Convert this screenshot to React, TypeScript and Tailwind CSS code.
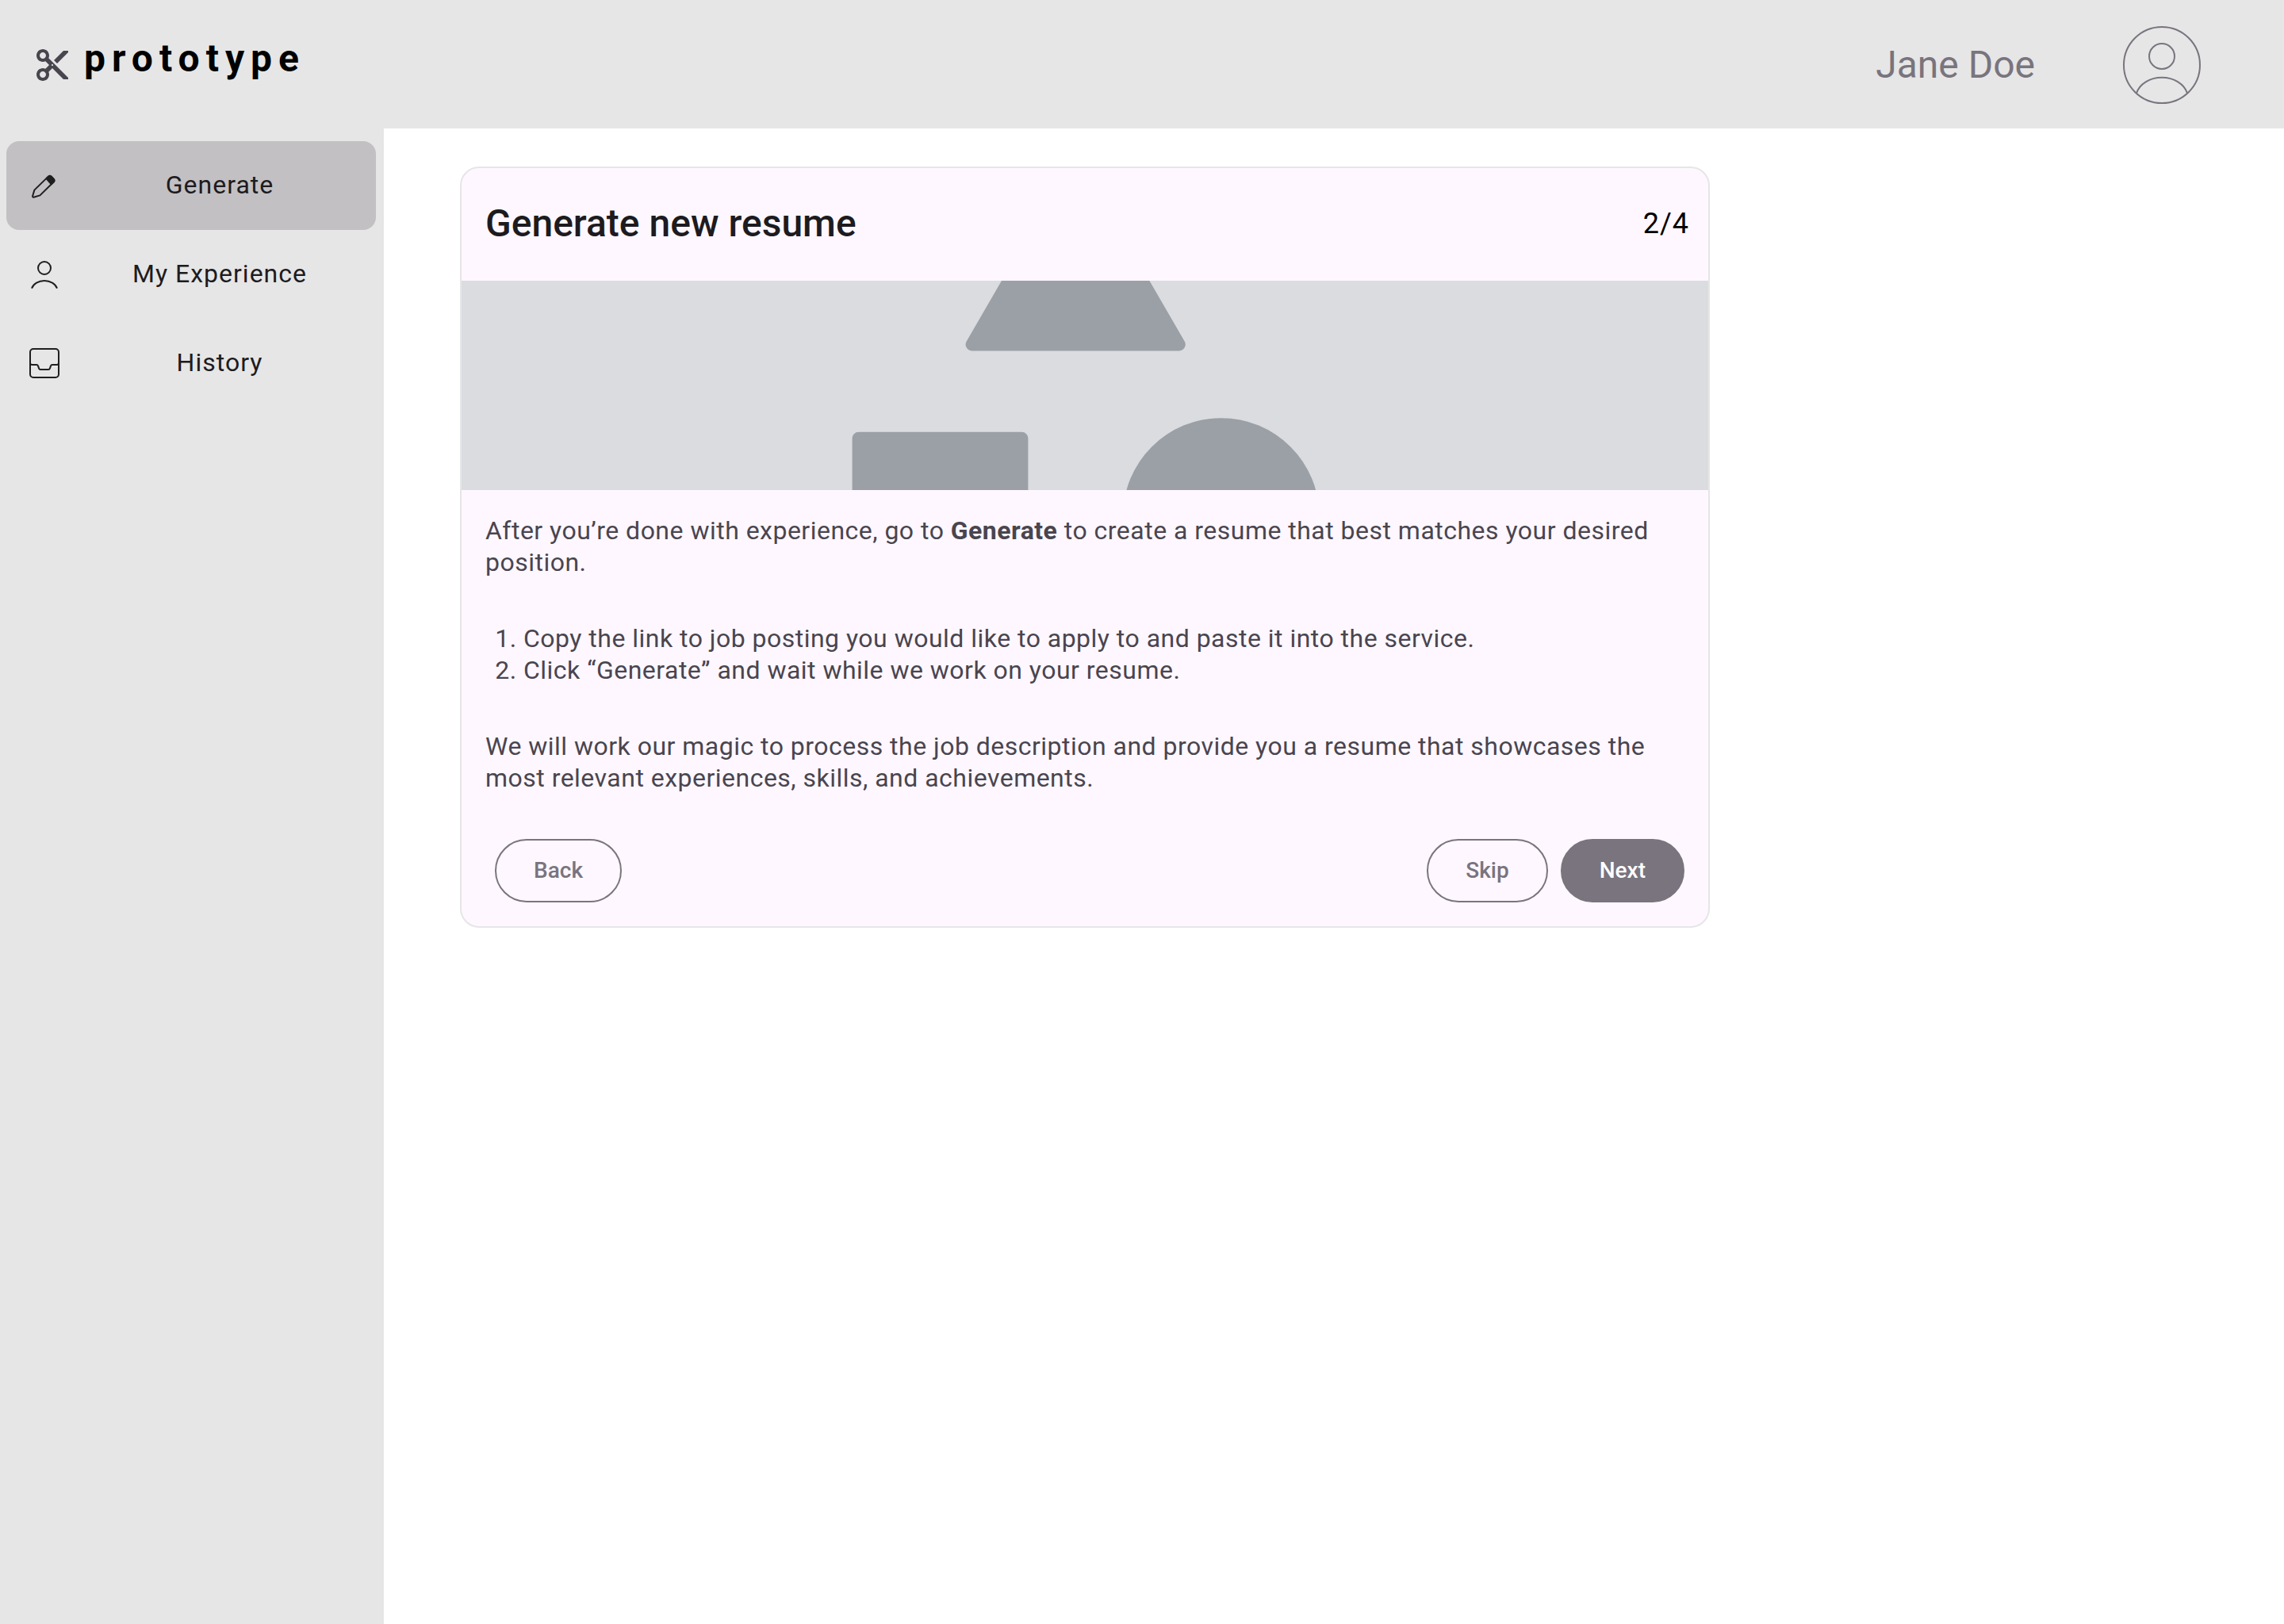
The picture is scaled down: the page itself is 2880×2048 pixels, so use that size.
import type { ReactNode } from "react";
import { MdContentCut } from "react-icons/md";

function PencilIcon() {
  return (
    <svg viewBox="0 0 48 48" className="size-12 shrink-0" fill="none" stroke="#1f1f1f" strokeWidth="2" strokeLinecap="round" strokeLinejoin="round" aria-hidden="true">
      <path d="M11.4 29.6 28.6 12.9Q30.5 10.8 32.5 12.5L35.6 15.6Q37.3 17.6 35.6 19.5L18.4 36.4 10.4 38.7Q8.9 38.9 9.1 37.2Z" />
      <path d="M26.4 15.2 28.6 12.9Q30.5 10.8 32.5 12.5L35.6 15.6Q37.3 17.6 35.6 19.5L32.7 22.3Z" fill="#1f1f1f" />
    </svg>
  );
}

function PersonIcon() {
  return (
    <svg viewBox="0 0 48 48" className="size-12 shrink-0" fill="none" stroke="#1f1f1f" strokeWidth="2" aria-hidden="true">
      <circle cx="24" cy="16" r="8" />
      <path d="M8 41.6C10.2 35.9 16.6 32 24 32S37.8 35.9 40 41.6" />
    </svg>
  );
}

function InboxIcon() {
  return (
    <svg viewBox="0 0 48 48" className="size-12 shrink-0" fill="none" stroke="#1f1f1f" strokeWidth="2" strokeLinejoin="round" aria-hidden="true">
      <rect x="6" y="6" width="36" height="36" rx="4" />
      <path d="M6 23.5Q6 26 8.5 26H14Q15.6 26 16 27.4L17 30.4Q17.5 32 19 32H29Q30.5 32 31 30.4L32 27.4Q32.4 26 34 26H39.5Q42 26 42 23.5" />
    </svg>
  );
}

function Avatar() {
  return (
    <svg viewBox="0 0 100 100" className="size-25 shrink-0" fill="none" stroke="#79747e" strokeWidth="2" aria-hidden="true">
      <circle cx="50" cy="50" r="48" />
      <circle cx="50" cy="39" r="16" />
      <path d="M18 85.6C21.6 74 34.6 65.8 50 65.8S78.4 74 82 85.6" />
    </svg>
  );
}

function Illustration() {
  return (
    <svg viewBox="0 0 1572 264" preserveAspectRatio="xMidYMid slice" className="h-66 w-full bg-[#dadce0]" fill="#9aa0a6" aria-hidden="true">
      <path d="M681 0 637 76A8 8 0 0 0 644 88.4H904.4A8 8 0 0 0 911.4 76L867.4 0Z" />
      <rect x="492.6" y="190.8" width="221.8" height="200" rx="8" />
      <circle cx="957.8" cy="297" r="123.8" />
    </svg>
  );
}

function NavItem({ icon, label, active }: { icon: ReactNode; label: string; active?: boolean }) {
  return (
    <a
      href="#"
      aria-current={active ? "page" : undefined}
      className={`flex h-28 items-center rounded-2xl pl-6 text-[32px] leading-12 tracking-[1px] text-[#1d1b20] ${active ? "bg-[#c2c0c3]" : ""}`}
    >
      {icon}
      <span className="flex-1 pb-0.5 text-center">{label}</span>
    </a>
  );
}

function PillButton({ label, filled }: { label: string; filled?: boolean }) {
  return (
    <button
      type="button"
      className={`h-20 rounded-full border-2 border-[#79747e] px-[47px] text-[28px] leading-10 font-medium tracking-normal ${filled ? "bg-[#79747e] text-white" : "text-[#79747e]"}`}
    >
      {label}
    </button>
  );
}

export default function App() {
  return (
    <div className="flex min-h-screen flex-col bg-white font-['Roboto',sans-serif]">
      <header className="flex h-[162px] items-center justify-between bg-[#e6e6e6] pt-0.5 pr-26 pl-[42px]">
        <div className="flex items-center gap-4">
          <MdContentCut className="size-12 text-[#49454f]" aria-hidden="true" />
          <span className="pb-4 text-5xl leading-14 font-bold tracking-[8px] text-black">prototype</span>
        </div>
        <div className="flex items-center gap-[110px]">
          <span className="text-5xl leading-14 text-[#79747e]">Jane Doe</span>
          <Avatar />
        </div>
      </header>

      <div className="flex flex-1">
        <nav className="w-[484px] shrink-0 bg-[#e6e6e6] pt-4 pr-[10px] pl-2">
          <NavItem icon={<PencilIcon />} label="Generate" active />
          <NavItem icon={<PersonIcon />} label="My Experience" />
          <NavItem icon={<InboxIcon />} label="History" />
        </nav>

        <main className="flex-1 px-24 pt-12">
          <section className="max-w-[1576px] overflow-hidden rounded-3xl border-2 border-[#e6e6e6] bg-[#fef7ff]">
            <div className="flex h-[142px] items-center justify-between pr-6 pb-0.5 pl-[30px]">
              <h1 className="text-5xl leading-14 font-medium text-[#1d1b20]">Generate new resume</h1>
              <span className="text-4xl leading-14 tracking-[1px] text-black">2/4</span>
            </div>
            <Illustration />
            <div className="flex flex-col gap-14 px-[30px] pt-[31px] pb-[30px] text-[32px] leading-10 tracking-[0.015em] text-[#49454f]">
              <p>
                After you’re done with experience, go to <strong className="font-bold">Generate</strong> to create a resume that best matches your desired position.
              </p>
              <ol className="list-decimal pl-12">
                <li>Copy the link to job posting you would like to apply to and paste it into the service.</li>
                <li>Click “Generate” and wait while we work on your resume.</li>
              </ol>
              <p>We will work our magic to process the job description and provide you a resume that showcases the most relevant experiences, skills, and achievements.</p>
              <div className="flex items-center justify-between pt-px pl-3">
                <PillButton label="Back" />
                <div className="flex gap-4">
                  <PillButton label="Skip" />
                  <PillButton label="Next" filled />
                </div>
              </div>
            </div>
          </section>
        </main>
      </div>
    </div>
  );
}
